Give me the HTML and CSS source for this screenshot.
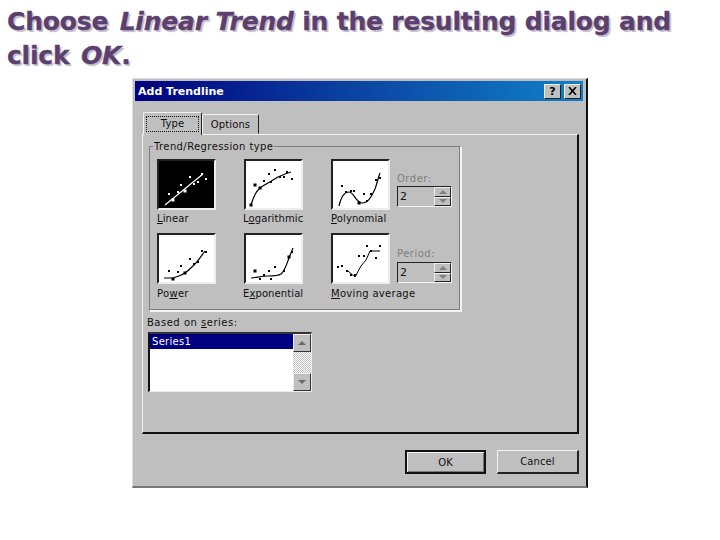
FILE: index.html
```html
<!DOCTYPE html>
<html lang="en">
<head>
<meta charset="utf-8">
<title>Add Trendline</title>
<link rel="stylesheet" href="styles.css">
</head>
<body>
<h1 class="headline">Choose <em>Linear Trend</em> in the resulting dialog and click <em>OK</em>.</h1>
<div class="dialog">
  <div class="titlebar">
    <span class="title">Add Trendline</span>
    <span class="winbtn help">?</span>
    <span class="winbtn close"><svg width="9" height="8" viewBox="0 0 9 8"><path d="M1 0l7 8M8 0L1 8" stroke="#000" stroke-width="1.6" fill="none"/></svg></span>
  </div>
  <div class="tabs">
    <span class="tab active"><span class="focus">Type</span></span>
    <span class="tab">Options</span>
  </div>
  <div class="panel">
    <fieldset class="group">
      <legend>Trend/Regression type</legend>
      <div class="row">
        <div class="cell">
          <svg class="thumb selected" viewBox="2 2 55 47"><path class="curve" d="M8 46L46 15"/><path class="dots" d="M12 35h.01M21 33h.01M24 26h.01M33 18h.01M37 25h.01M41 23h.01M45 15h.01M49 20h.01"/><path class="big" d="M16 41h.01M28 32h.01"/></svg>
          <div class="label"><u>L</u>inear</div>
        </div>
        <div class="cell">
          <svg class="thumb" viewBox="2 2 55 47"><path class="curve" d="M7 46C9 39 11 33 16 29C21 25 28 22 34 18C39 16 43 14 47 13"/><path class="dots" d="M20 22h.01M25 15h.01M27 23h.01M31 11h.01M36 18h.01M40 18h.01M43 13h.01M48 20h.01"/><path class="big" d="M7 46h.01M11 26h.01M16 29h.01"/></svg>
          <div class="label shift">L<u>o</u>garithmic</div>
        </div>
        <div class="cell">
          <svg class="thumb" viewBox="2 2 55 47"><path class="curve" d="M8 47C10 38 13 33 18 33C23 33 25 44 31 44C38 44 41 36 44 30C46 25 47 19 49 14"/><path class="dots" d="M11 27h.01M15 33h.01M20 32h.01M23 32h.01M33 35h.01M36 42h.01M40 35h.01M45 21h.01M49 19h.01"/><path class="big" d="M28 44h.01"/></svg>
          <div class="label"><u>P</u>olynomial</div>
        </div>
        <div class="spin-cell">
          <div class="spin-label">Order:</div>
          <div class="spin"><span class="spin-value">2</span><span class="spin-btns"><span class="spin-btn"><i class="tri up"></i></span><span class="spin-btn"><i class="tri down"></i></span></span></div>
        </div>
      </div>
      <div class="row">
        <div class="cell">
          <svg class="thumb" viewBox="2 2 55 47"><path class="curve" d="M7 45L16 45C20 44 25 42 28 40C32 37 35 34 38 31C42 27 45 22 48 18"/><path class="dots" d="M12 38h.01M21 39h.01M24 33h.01M33 26h.01M37 31h.01M41 29h.01M45 18h.01M49 19h.01"/><path class="big" d="M16 46h.01M28 40h.01"/></svg>
          <div class="label wide">Po<u>w</u>er</div>
        </div>
        <div class="cell">
          <svg class="thumb" viewBox="2 2 55 47"><path class="curve" d="M7 45C15 44 20 43 24 43C30 43 34 43 37 41C41 38 43 30 45 25C46 22 48 18 49 15"/><path class="dots" d="M16 46h.01M20 42h.01M25 38h.01M27 46h.01M31 34h.01M40 38h.01M48 19h.01"/><path class="big" d="M11 38h.01M45 24h.01"/></svg>
          <div class="label shift">E<u>x</u>ponential</div>
        </div>
        <div class="cell">
          <svg class="thumb" viewBox="2 2 55 47"><path class="curve thin" d="M17 38L24 44L30 33L35 27L39 18L49 18"/><path class="dots" d="M7 34h.01M11 33h.01M16 38h.01M20 42h.01M24 42h.01M28 23h.01M33 23h.01M36 13h.01M40 18h.01M45 25h.01M49 13h.01"/></svg>
          <div class="label wide"><u>M</u>oving average</div>
        </div>
        <div class="spin-cell">
          <div class="spin-label">Period:</div>
          <div class="spin"><span class="spin-value">2</span><span class="spin-btns"><span class="spin-btn"><i class="tri up"></i></span><span class="spin-btn"><i class="tri down"></i></span></span></div>
        </div>
      </div>
    </fieldset>
    <div class="series-label">Based on <u>s</u>eries:</div>
    <div class="listbox">
      <div class="items"><div class="item">Series1</div></div>
      <div class="scrollbar">
        <span class="scroll-btn"><i class="tri up dark"></i></span>
        <span class="track"></span>
        <span class="scroll-btn"><i class="tri down dark"></i></span>
      </div>
    </div>
  </div>
  <div class="actions">
    <span class="button default">OK</span>
    <span class="button">Cancel</span>
  </div>
</div>
</body>
</html>
```

FILE: styles.css
```css
html, body {
  margin: 0;
  padding: 0;
  background: #fff;
}
body {
  width: 720px;
  height: 540px;
  overflow: hidden;
}
.headline {
  margin: 0;
  padding: 5px 0 0 7px;
  width: 690px;
  font: bold 25px/34px "DejaVu Sans", sans-serif;
  letter-spacing: -.2px;
  color: #5b3f6f;
  -webkit-text-stroke: .3px #5b3f6f;
  text-shadow: 2px 2px 1px #c2bcc8;
}
.headline em {
  font-style: italic;
  margin-left: 3px;
}
.dialog {
  box-sizing: border-box;
  width: 456px;
  height: 410px;
  margin: 5px 0 0 132px;
  padding: 3px 3px 0;
  background: #bfbfbf;
  border-top: 1px solid #dfdfdf;
  border-left: 1px solid #dfdfdf;
  border-right: 2px solid #111;
  border-bottom: 2px solid #777;
  font: 10px/13px "DejaVu Sans", sans-serif;
  letter-spacing: .1px;
  color: #111;
}
.titlebar {
  display: flex;
  align-items: center;
  gap: 3px;
  height: 20px;
  margin: -1px 0 0 -1px;
  padding: 0 2px 0 3px;
  background: linear-gradient(90deg, #00007e 0%, #0a3fa0 45%, #1080c8 100%);
}
.title {
  flex: 1;
  color: #fff;
  font-weight: bold;
  font-size: 11px;
  letter-spacing: 0;
}
.winbtn {
  box-sizing: border-box;
  display: flex;
  align-items: center;
  justify-content: center;
  width: 17px;
  height: 15px;
  background: #bfbfbf;
  border: 1px solid;
  border-color: #eee #222 #222 #eee;
  font-weight: bold;
  font-size: 11px;
  color: #000;
}
.tabs {
  display: flex;
  align-items: flex-end;
  height: 22px;
  margin: 11px 0 0 7px;
}
.tab {
  box-sizing: border-box;
  display: flex;
  align-items: center;
  justify-content: center;
  width: 57px;
  height: 20px;
  margin-bottom: 0;
  border: 1px solid;
  border-color: #f2f2f2 #222 transparent #f2f2f2;
  border-radius: 2px 2px 0 0;
  background: #bfbfbf;
}
.tab.active {
  position: relative;
  z-index: 1;
  width: 59px;
  height: 23px;
  margin-bottom: -1px;
  border-bottom: 0;
}
.focus {
  display: block;
  box-sizing: border-box;
  width: 53px;
  height: 16px;
  line-height: 14px;
  text-align: center;
  border: 1px dotted #111;
}
.panel {
  box-sizing: border-box;
  width: 437px;
  height: 300px;
  margin-left: 6px;
  padding: 5px 0 0 6px;
  background: #bfbfbf;
  border: 1px solid;
  border-color: #f2f2f2 #111 #111 #f2f2f2;
  border-width: 1px 2px 2px 1px;
}
.group {
  box-sizing: border-box;
  width: 312px;
  height: 171px;
  margin: 0;
  padding: 6px 0 0 7px;
  border: 1px solid;
  border-color: #7f7f7f #f4f4f4 #f4f4f4 #7f7f7f;
  box-shadow: inset -1px -1px 0 #7f7f7f, 1px 1px 0 #f4f4f4;
}
.group legend {
  margin-left: -4px;
  padding: 0 1px;
  line-height: 13px;
  letter-spacing: .4px;
}
.row {
  display: flex;
  height: 74px;
}
.cell {
  width: 87px;
  flex: none;
}
.thumb {
  display: block;
  box-sizing: border-box;
  width: 59px;
  height: 51px;
  background: #fff;
  border: 2px solid;
  border-color: #222 #eee #eee #222;
}
.curve {
  fill: none;
  stroke: #000;
  stroke-width: 1.2;
}
.curve.thin {
  stroke-width: 1;
}
.dots, .big {
  fill: none;
  stroke: #000;
  stroke-linecap: square;
}
.dots {
  stroke-width: 2;
}
.big {
  stroke-width: 3;
}
.selected {
  background: #000;
}
.selected .curve, .selected .dots, .selected .big {
  stroke: #fff;
}
.label {
  margin-top: 2px;
  white-space: nowrap;
}
.row + .row .label {
  margin-top: 3px;
}
.label.shift {
  margin-left: -1px;
}
.label.wide {
  letter-spacing: .3px;
}
.spin-cell {
  width: 55px;
  padding-top: 13px;
  margin-left: -21px;
}
.row + .row .spin-cell {
  padding-top: 14px;
}
.row + .row .spin {
  margin-top: 2px;
}
.spin-label {
  color: #808080;
  letter-spacing: .5px;
}
.spin {
  box-sizing: border-box;
  display: flex;
  width: 55px;
  height: 21px;
  margin-top: 1px;
  border: 1px solid;
  border-color: #222 #f4f4f4 #f4f4f4 #222;
  background: #bfbfbf;
}
.spin-value {
  flex: 1;
  padding-left: 2px;
  line-height: 19px;
  font-size: 11px;
}
.spin-btns {
  display: flex;
  flex-direction: column;
  width: 17px;
}
.spin-btn {
  flex: 1;
  display: flex;
  align-items: center;
  justify-content: center;
  border: 1px solid;
  border-color: #eee #222 #222 #eee;
}
.tri {
  display: block;
  width: 0;
  height: 0;
  border-left: 4px solid transparent;
  border-right: 4px solid transparent;
}
.tri.up {
  border-bottom: 4px solid #808080;
}
.tri.down {
  border-top: 4px solid #808080;
}
.tri.up.dark {
  border-bottom-color: #6a6a6a;
}
.tri.down.dark {
  border-top-color: #6a6a6a;
}
.series-label {
  margin: 5px 0 0 -2px;
  letter-spacing: .5px;
}
.listbox {
  box-sizing: border-box;
  display: flex;
  width: 164px;
  height: 60px;
  margin: 3px 0 0 -1px;
  background: #fff;
  border: 1px solid;
  border-width: 2px 1px 1px 2px;
  border-color: #333 #eee #eee #111;
}
.items {
  flex: 1;
}
.item {
  height: 15px;
  padding-left: 2px;
  background: #000080;
  color: #fff;
  line-height: 15px;
  letter-spacing: .3px;
}
.scrollbar {
  display: flex;
  flex-direction: column;
  width: 18px;
}
.scroll-btn {
  box-sizing: border-box;
  display: flex;
  align-items: center;
  justify-content: center;
  height: 18px;
  background: #bfbfbf;
  border: 1px solid;
  border-color: #eee #333 #333 #eee;
}
.track {
  flex: 1;
  background: repeating-conic-gradient(#bfbfbf 0 25%, #fff 0 50%) 0 0 / 2px 2px;
}
.actions {
  display: flex;
  justify-content: flex-end;
  gap: 11px;
  margin: 16px 4px 0 0;
}
.button {
  box-sizing: border-box;
  display: flex;
  align-items: center;
  justify-content: center;
  width: 82px;
  height: 24px;
  background: #bfbfbf;
  border: 1px solid;
  border-color: #f2f2f2 #222 #222 #f2f2f2;
  border-width: 1px 2px 2px 1px;
}
.button.default {
  width: 81px;
  border: 2px solid #111;
  box-shadow: inset 1px 1px 0 #f2f2f2, inset -1px -1px 0 #777;
}
```
